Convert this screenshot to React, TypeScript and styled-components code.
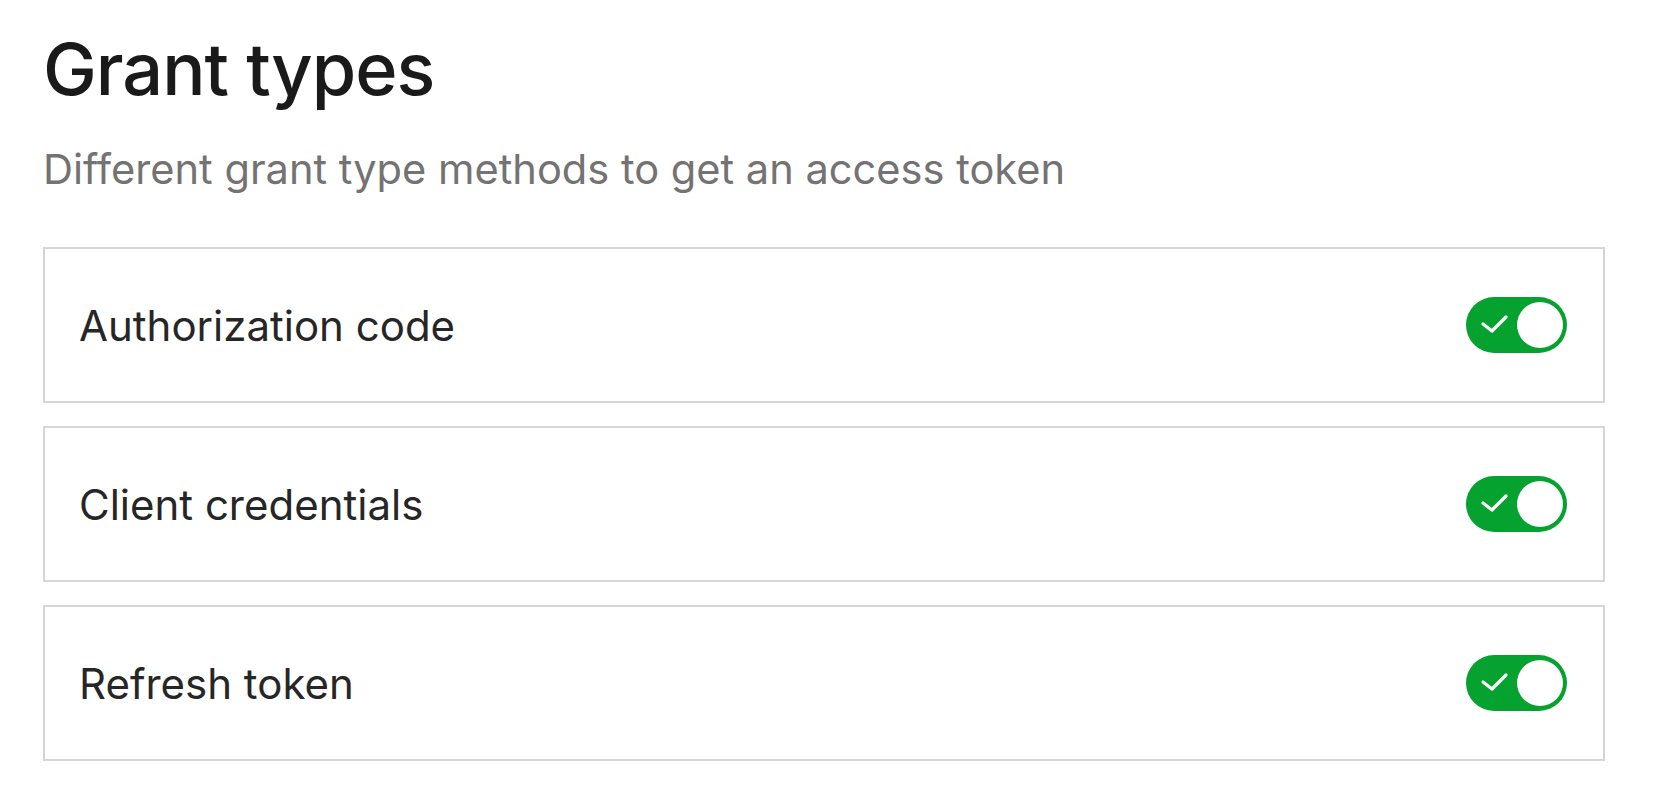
import React, { useState } from 'react'
import styled, { createGlobalStyle } from 'styled-components'

const GlobalStyle = createGlobalStyle`
  html, body {
    margin: 0;
    padding: 0;
    background: #ffffff;
  }
  body {
    font-family: Inter, "Noto Sans", "Liberation Sans", sans-serif;
    -webkit-font-smoothing: antialiased;
  }
`

const Page = styled.div`
  padding: 25px 53px 0 43px;
`

const Title = styled.h1`
  margin: 0;
  font-size: 72px;
  line-height: 88px;
  font-weight: 500;
  letter-spacing: -1px;
  color: #1a1a1a;
`

const Subtitle = styled.p`
  margin: 32px 0 0;
  font-size: 41.6px;
  line-height: 48px;
  font-weight: 400;
  color: #747272;
`

const List = styled.div`
  display: flex;
  flex-direction: column;
  gap: 23px;
  margin-top: 54px;
`

const Card = styled.div`
  display: flex;
  align-items: center;
  justify-content: space-between;
  height: 156px;
  box-sizing: border-box;
  padding: 0 36px 0 34px;
  border: 2px solid #d8d5d4;
  background: #ffffff;
`

const Label = styled.span`
  font-size: 42px;
  font-weight: 400;
  color: #262626;
`

const Toggle = styled.button<{ $on: boolean }>`
  position: relative;
  flex: none;
  width: 101px;
  height: 56px;
  border: none;
  border-radius: 28px;
  padding: 0;
  cursor: pointer;
  background: ${({ $on }) => ($on ? '#06a22f' : '#c9c9c9')};
`

const Knob = styled.span<{ $on: boolean }>`
  position: absolute;
  top: 5px;
  left: ${({ $on }) => ($on ? '51px' : '5px')};
  width: 46px;
  height: 46px;
  border-radius: 50%;
  background: #ffffff;
`

const Check = styled.svg`
  position: absolute;
  left: 14px;
  top: 16px;
`

const grantTypes = ['Authorization code', 'Client credentials', 'Refresh token']

const App = () => {
  const [enabled, setEnabled] = useState<boolean[]>([true, true, true])

  const flip = (i: number) => {
    setEnabled((prev) => prev.map((v, j) => (j === i ? !v : v)))
  }

  return (
    <Page>
      <GlobalStyle />
      <Title>Grant types</Title>
      <Subtitle>Different grant type methods to get an access token</Subtitle>
      <List>
        {grantTypes.map((name, i) => (
          <Card key={name}>
            <Label>{name}</Label>
            <Toggle $on={enabled[i]} onClick={() => flip(i)} aria-label={name}>
              {enabled[i] && (
                <Check width="30" height="22" viewBox="0 0 30 22" fill="none">
                  <path d="M3 11 L12 18 L26 4" stroke="#ffffff" strokeWidth="3.2" strokeLinecap="round" strokeLinejoin="round" />
                </Check>
              )}
              <Knob $on={enabled[i]} />
            </Toggle>
          </Card>
        ))}
      </List>
    </Page>
  )
}

export default App
